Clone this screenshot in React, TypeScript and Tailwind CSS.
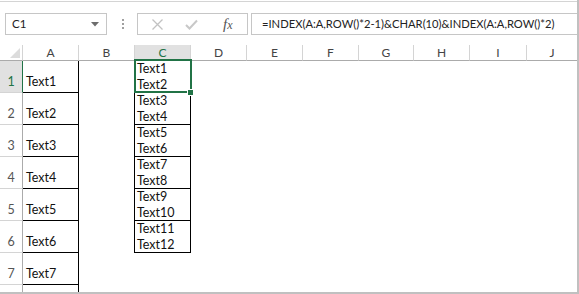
import React from "react";

const font = { fontFamily: "Lato, 'Open Sans', sans-serif" };

const cols = ["A", "B", "C", "D", "E", "F", "G", "H", "I", "J"];
const colW = ["w-[56px]", "w-[56px]", "w-[56px]", "w-[56px]", "w-[56px]", "w-[56px]", "w-[55px]", "w-[56px]", "w-[57px]", "w-[50px]"];

function DataRow({ r }: { r: number }) {
  const last = r === 8;
  const h = last ? "h-[12px]" : "h-[32px]";
  const inC = r <= 6;
  return (
    <div className={`flex ${h} shrink-0`}>
      <div
        className={`w-[23px] shrink-0 border-r ${r === 1 ? "border-r-[#217346] bg-[#e1e1e1] text-[#217346]" : "border-r-[#ababab] text-[#555]"} border-b border-b-[#d4d4d4] flex items-end justify-center pb-[2px] text-[12.5px] leading-[16px]`}
      >
        {last ? "" : r}
      </div>
      {/* A */}
      <div className={`${colW[0]} shrink-0 border-r border-r-black ${last ? "" : "border-b border-b-black"} flex items-end pl-[3px] pb-[2px] text-[12.5px] leading-[16px] text-[#111]`}>
        {last ? "" : `Text${r}`}
      </div>
      {/* B */}
      <div className={`${colW[1]} shrink-0 ${inC ? "border-r border-r-black" : ""}`} />
      {/* C */}
      <div className={`${colW[2]} shrink-0 ${inC ? "border-r border-r-black border-b border-b-black" : ""} flex flex-col pl-[2px] text-[12.5px] leading-[16px] text-[#111]`}>
        {inC && (
          <>
            <span className="h-[16px]">Text{r * 2 - 1}</span>
            <span className="h-[15px]">Text{r * 2}</span>
          </>
        )}
      </div>
      {colW.slice(3).map((w, i) => (
        <div key={i} className={`${w} shrink-0`} />
      ))}
    </div>
  );
}

export default function App() {
  return (
    <div className="w-[579px] h-[294px] bg-white border-r-2 border-b-2 border-[#c0c0c0] overflow-hidden flex flex-col" style={font}>
      <div className="h-px shrink-0" />
      <div className="h-px bg-[#d4d4d4] shrink-0" />
      {/* Toolbar */}
      <div className="h-[43px] shrink-0 flex items-start pt-[11px]">
        <div className="ml-[5px] w-[102px] shrink-0 h-[22px] border border-[#c6c6c6] flex items-center pl-[6px] pr-[7px] text-[11.5px] text-[#222]">
          <span className="flex-1">C1</span>
          <svg width="8" height="5" viewBox="0 0 8 5"><path d="M0 0H8L4 4.5Z" fill="#6d6d6d" /></svg>
        </div>
        <div className="ml-[14px] w-[3px] shrink-0 h-[22px] flex flex-col items-center justify-center gap-[2px]">
          <div className="w-[2px] h-[2px] bg-[#a0a0a0]" />
          <div className="w-[2px] h-[2px] bg-[#a0a0a0]" />
          <div className="w-[2px] h-[2px] bg-[#a0a0a0]" />
        </div>
        <div className="ml-[13px] w-[111px] shrink-0 h-[22px] border border-[#c6c6c6] flex items-center">
          <svg className="ml-[14px]" width="11" height="11" viewBox="0 0 11 11">
            <path d="M0.5 0.5L10.5 10.5M10.5 0.5L0.5 10.5" stroke="#c2c2c2" strokeWidth="1.3" fill="none" />
          </svg>
          <svg className="ml-[22px]" width="13" height="11" viewBox="0 0 13 11">
            <path d="M1 6L4.5 9.5L12 1.5" stroke="#c8c8c8" strokeWidth="2" fill="none" />
          </svg>
          <span
            className="ml-[25px] text-[15px] italic text-[#555] leading-none"
            style={{ fontFamily: "'Liberation Serif', serif" }}
          >
            f<span className="text-[12px]">x</span>
          </span>
        </div>
        <div className="ml-[3px] flex-1 min-w-0 overflow-hidden h-[22px] border-t border-b border-l border-[#c6c6c6] flex items-center pl-[10px] text-[11.2px] text-[#222] whitespace-nowrap">
          =INDEX(A:A,ROW()*2-1)&amp;CHAR(10)&amp;INDEX(A:A,ROW()*2)
        </div>
      </div>
      {/* Grid */}
      <div className="relative flex-1 flex flex-col">
        {/* header */}
        <div className="flex h-[16px] shrink-0 text-[12px] text-[#444]">
          <div className="w-[23px] shrink-0 border-r border-r-[#d4d4d4] border-b border-b-[#ababab] relative">
            <svg className="absolute right-[2px] bottom-[2px]" width="10" height="10" viewBox="0 0 10 10">
              <path d="M10 0V10H0Z" fill="#dcdcdc" />
            </svg>
          </div>
          {cols.map((c, i) => (
            <div
              key={c}
              className={`${colW[i]} shrink-0 ${i < 9 ? "border-r border-r-[#d4d4d4]" : ""} border-b border-b-[#ababab] flex items-center justify-center leading-[15px] ${c === "C" ? "bg-[#e1e1e1] text-[#217346]" : ""}`}
            >
              {c}
            </div>
          ))}
        </div>
        {[1, 2, 3, 4, 5, 6, 7, 8].map((r) => (
          <DataRow key={r} r={r} />
        ))}
        {/* selection */}
        <div className="absolute left-[134px] top-[14px] w-[58px] h-[34px] border-2 border-[#217346]" />
        <div className="absolute left-[187px] top-[44px] w-[7px] h-[7px] bg-[#217346] border border-white" />
      </div>
    </div>
  );
}
